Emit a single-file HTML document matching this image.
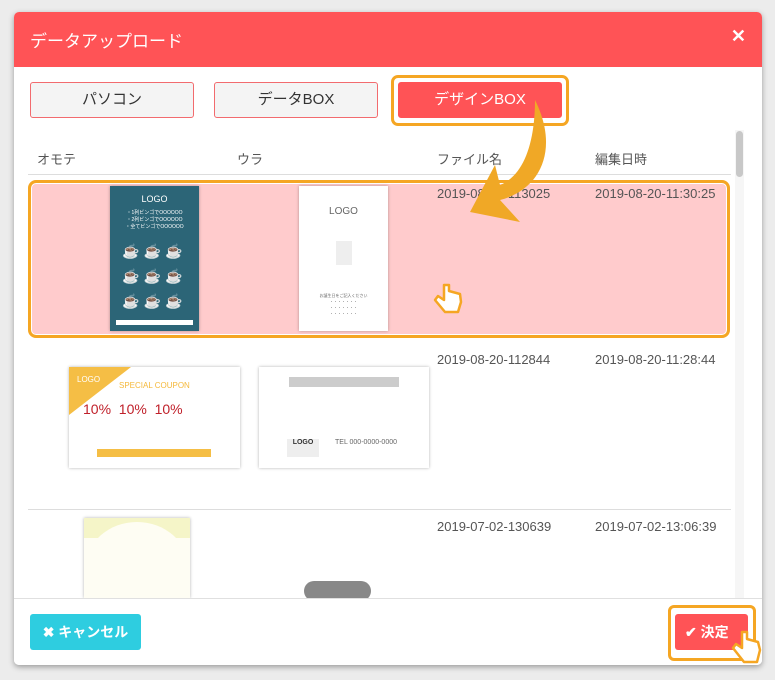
<!DOCTYPE html>
<html><head><meta charset="utf-8"><style>
*{box-sizing:border-box;margin:0;padding:0}
body{width:775px;height:680px;background:#ececec;font-family:"Liberation Sans","Noto Sans CJK JP",sans-serif;position:relative;overflow:hidden;color:#444}
.dlg{position:absolute;left:14px;top:12px;width:748px;height:653px;background:#fff;border-radius:5px;box-shadow:0 2px 6px rgba(0,0,0,.35);overflow:hidden}
.hd{position:absolute;left:0;top:0;width:100%;height:55px;background:#ff5356;color:#fff;font-size:17px;padding:15px 16px}
.x{position:absolute;right:16px;top:14px;font-size:18px;font-weight:bold}
.a{position:absolute}
.btn{position:absolute;top:70px;height:36px;width:164px;border:1px solid #f26b6e;border-radius:3px;background:#f4f4f4;font-size:15px;text-align:center;line-height:34px;color:#333}
.th{position:absolute;top:137px;font-size:13px;color:#555}
.dt{position:absolute;font-size:13px;color:#555}
.card{position:absolute;background:#fff;box-shadow:0 0 3px rgba(0,0,0,.3)}
</style></head><body>
<div class="dlg">
<div class="hd">データアップロード<span class="x">✕</span></div>
<div class="btn" style="left:16px">パソコン</div>
<div class="btn" style="left:200px">データBOX</div>
<div class="a" style="left:377px;top:63px;width:178px;height:51px;border:3px solid #f5a623;border-radius:7px;background:#fff"></div>
<div class="btn" style="left:384px;background:#ff5356;color:#fff;border-color:#ff5356">デザインBOX</div>
<div class="th" style="left:23px">オモテ</div><div class="th" style="left:223px">ウラ</div><div class="th" style="left:423px">ファイル名</div><div class="th" style="left:581px">編集日時</div>
<div class="a" style="left:721px;top:118px;width:9px;height:470px;background:#f6f6f6"></div>
<div class="a" style="left:722px;top:119px;width:7px;height:46px;background:#c8c8c8;border-radius:4px"></div>
<div class="a" style="left:14px;top:162px;width:703px;height:1px;background:#ddd"></div>
<div class="a" style="left:14px;top:168px;width:702px;height:158px;background:#ffcbcc;border:3px solid #f5a623;border-radius:8px;box-shadow:inset 0 0 0 1px #fff"></div>
<div class="card" style="left:96px;top:174px;width:89px;height:145px;background:#2c6577;color:#fff;font-size:9px;text-align:center;padding-top:8px">LOGO<div style="font-size:5px;margin-top:6px;line-height:7px">・1列ビンゴでOOOOOO<br>・2列ビンゴでOOOOOO<br>・全てビンゴでOOOOOO</div><div style="font-size:14px;letter-spacing:4px;line-height:25px;margin-top:8px">☕☕☕<br>☕☕☕<br>☕☕☕</div><div style="margin:6px 6px 0;height:5px;background:#fff"></div></div>
<div class="card" style="left:285px;top:174px;width:89px;height:145px;font-size:10px;color:#666;text-align:center;padding-top:20px">LOGO<div style="margin:24px auto 0;width:16px;height:24px;background:#eee"></div><div style="font-size:4px;margin-top:28px;line-height:6px">お誕生日をご記入ください<br>・・・・・・・<br>・・・・・・・<br>・・・・・・・</div></div>
<div class="dt" style="left:423px;top:174px">2019-08-20-113025</div><div class="dt" style="left:581px;top:174px">2019-08-20-11:30:25</div>
<div class="a" style="left:14px;top:497px;width:703px;height:1px;background:#ddd"></div>
<div class="card" style="left:55px;top:355px;width:171px;height:101px"><div class="a" style="left:0;top:0;width:0;height:0;border-top:48px solid #f5be45;border-right:62px solid transparent"></div><div class="a" style="left:8px;top:8px;color:#fff;font-size:8px">LOGO</div><div class="a" style="left:50px;top:14px;color:#f5b93b;font-size:8px">SPECIAL COUPON</div><div class="a" style="left:14px;top:34px;color:#c0202a;font-size:14px">10% &nbsp;10% &nbsp;10%</div><div class="a" style="left:28px;top:82px;width:114px;height:8px;background:#f5be45"></div></div>
<div class="card" style="left:245px;top:355px;width:170px;height:101px"><div class="a" style="left:30px;top:10px;width:110px;height:10px;background:#ccc"></div><div class="a" style="left:28px;top:72px;width:32px;height:18px;background:#eee;font-size:7px;font-weight:bold;text-align:center;color:#333">LOGO</div><div class="a" style="left:76px;top:72px;font-size:7px;color:#666">TEL 000-0000-0000</div></div>
<div class="dt" style="left:423px;top:340px">2019-08-20-112844</div><div class="dt" style="left:581px;top:340px">2019-08-20-11:28:44</div>
<div class="card" style="left:70px;top:506px;width:106px;height:80px;background:#fefdf3"><div class="a" style="left:0;top:0;width:106px;height:20px;background:#f5f5c8"></div><div class="a" style="left:2px;top:4px;width:102px;height:90px;background:#fefdf3;border-radius:50% 50% 0 0"></div></div>
<div class="a" style="left:290px;top:569px;width:67px;height:20px;background:#888;border-radius:10px"></div>
<div class="dt" style="left:423px;top:507px">2019-07-02-130639</div><div class="dt" style="left:581px;top:507px">2019-07-02-13:06:39</div>
<div class="a" style="left:0;top:586px;width:748px;height:67px;background:#fff;border-top:1px solid #e0e0e0"></div>
<div class="a" style="left:16px;top:602px;width:111px;height:36px;background:#2ecde0;border-radius:3px;color:#fff;font-weight:bold;font-size:14px;line-height:36px;text-align:center">✖ キャンセル</div>
<div class="a" style="left:654px;top:593px;width:88px;height:56px;border:3px solid #f5a623;border-radius:6px"></div>
<div class="a" style="left:661px;top:602px;width:73px;height:36px;background:#ff5356;border-radius:3px;color:#fff;font-weight:bold;font-size:14px;line-height:36px;padding-left:10px">✔ 決定</div>
</div>
<svg class="a" style="left:0;top:0" width="775" height="680">
<path d="M535 100 C560 150 540 190 500 200 L520 222 L470 212 L495 165 L500 185 C525 175 535 140 535 100Z" fill="#f0a826"/>
<g fill="#fff" stroke="#f5a623" stroke-width="2.5" stroke-linejoin="round">
<path d="M444 285 L444 300 L438 296 L435 300 L445 312 L458 312 L461 302 L460 294 L449 291 L449 285 Z"/>
<path d="M742 632 L742 648 L736 644 L733 648 L744 662 L757 662 L760 650 L758 642 L747 639 L747 632 Z"/>
</g>
</svg>
</body></html>
